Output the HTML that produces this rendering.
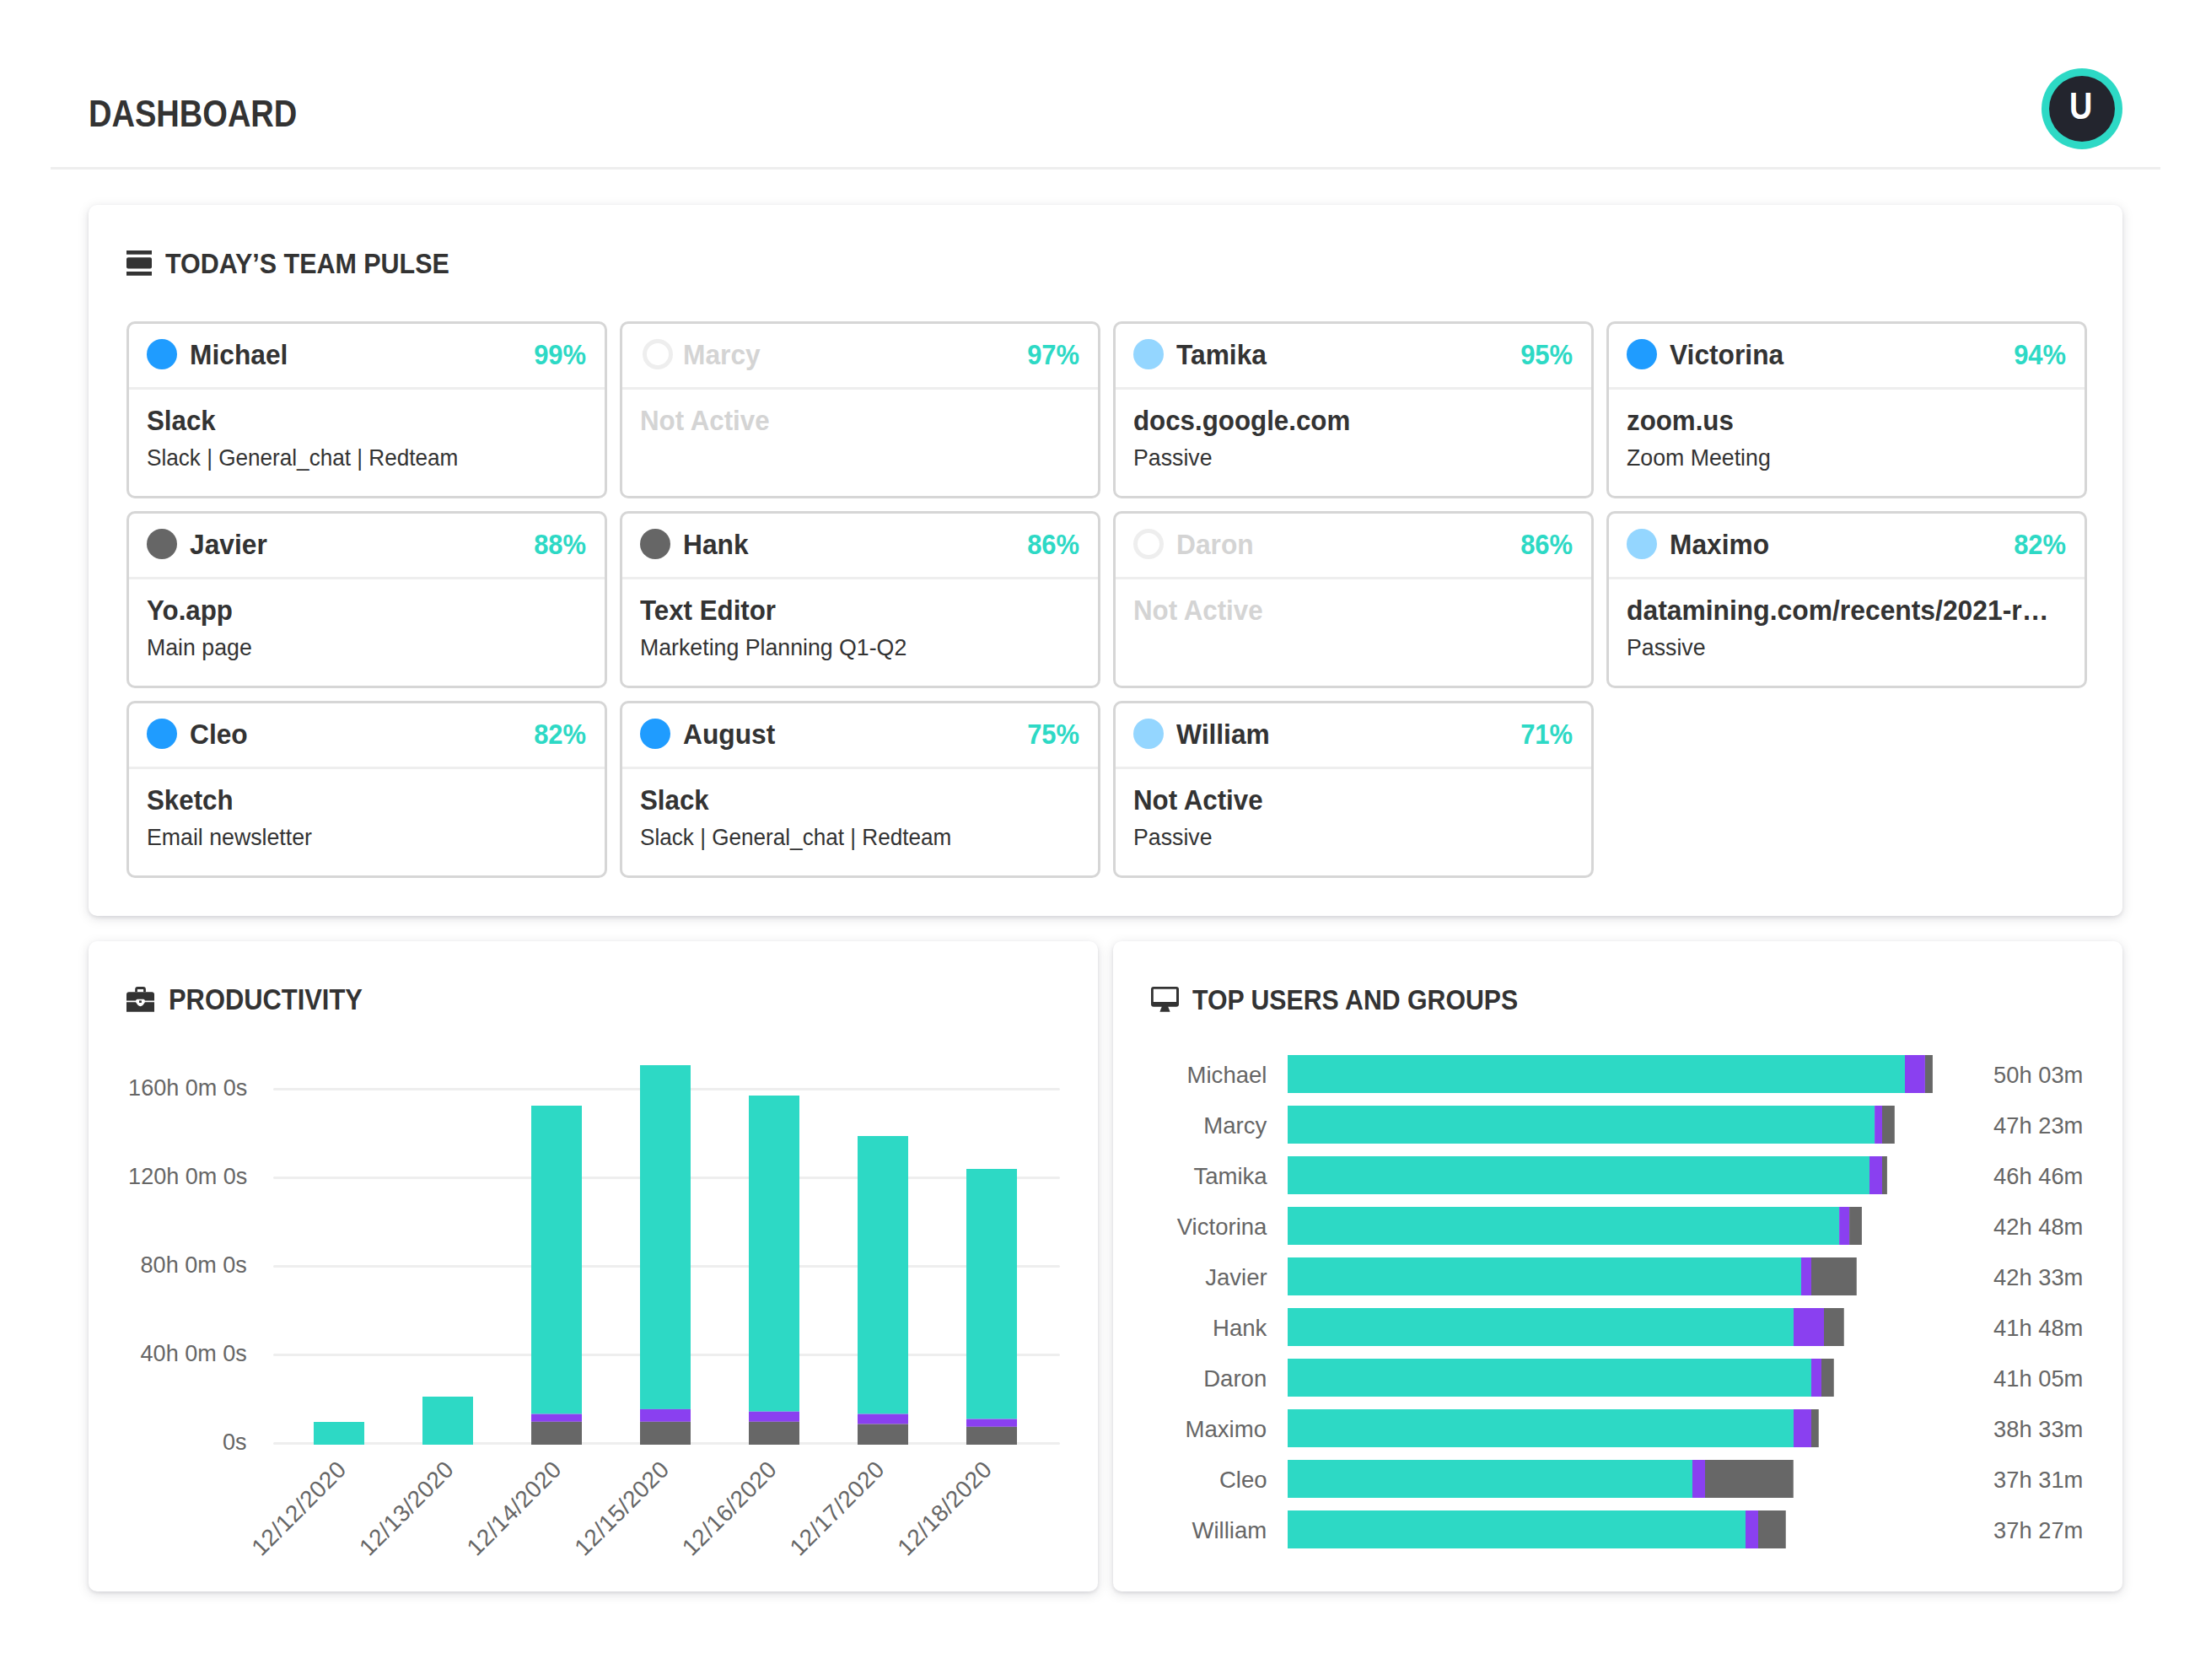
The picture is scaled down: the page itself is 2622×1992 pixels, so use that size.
<!DOCTYPE html>
<html><head><meta charset="utf-8"><title>Dashboard</title>
<style>
html,body{margin:0;padding:0;background:#ffffff;}
body{position:relative;width:2622px;height:1992px;overflow:hidden;font-family:"Liberation Sans", sans-serif;}
.t{position:absolute;line-height:1;white-space:nowrap;}
.card{position:absolute;background:#fff;border-radius:10px;box-shadow:0 2px 4px rgba(20,20,40,0.09),0 3px 14px rgba(20,20,40,0.13);}
.pc{position:absolute;width:570px;height:210px;box-sizing:border-box;border:3px solid #d6d6d6;border-radius:10px;background:#fff;}
.pc .sep{position:absolute;left:0;right:0;top:75px;height:3px;background:#eeeeee;}
</style></head>
<body>
<div class="t" style="left:105.2px;top:112.8px;font-size:44.5px;font-weight:700;color:#333333;transform:scaleX(0.855);transform-origin:0 0;">DASHBOARD</div>
<div style="position:absolute;left:60px;top:198px;width:2502px;height:3px;background:#eeeeee"></div>
<div style="position:absolute;left:2421px;top:81px;width:96px;height:96px;border-radius:50%;background:#2dd9c5"></div>
<div style="position:absolute;left:2430px;top:90px;width:78px;height:78px;border-radius:50%;background:#23252e"></div>
<div class="t" style="left:2454.4px;top:104.1px;font-size:44px;font-weight:700;color:#ffffff;transform:scaleX(0.86);transform-origin:0 0;">U</div>
<div class="card" style="left:105px;top:243px;width:2412px;height:843px"></div>
<svg style="position:absolute;left:150px;top:297px" width="30" height="30" viewBox="0 0 30 30">
<rect x="0" y="0" width="30" height="4.7" fill="#333333"/>
<rect x="0" y="8.2" width="30" height="13.4" rx="2" fill="#333333"/>
<rect x="0" y="25" width="30" height="4.8" fill="#333333"/>
</svg>
<div class="t" style="left:196.0px;top:295.2px;font-size:34px;font-weight:700;color:#333333;transform:scaleX(0.896);transform-origin:0 0;">TODAY’S TEAM PULSE</div>
<div class="pc" style="left:150px;top:381px"><div class="sep"></div></div>
<div style="position:absolute;left:174px;top:402px;width:36px;height:36px;border-radius:50%;background:#1f9cff"></div>
<div class="t" style="left:224.8px;top:403.2px;font-size:34px;font-weight:700;color:#333333;transform:scaleX(0.933);transform-origin:0 0;">Michael</div>
<div class="t" style="right:1927.0px;top:403.2px;font-size:34px;font-weight:700;color:#2dd9c5;transform:scaleX(0.91);transform-origin:100% 0;">99%</div>
<div class="t" style="left:174.2px;top:481.2px;font-size:34px;font-weight:700;color:#333333;transform:scaleX(0.92);transform-origin:0 0;">Slack</div>
<div class="t" style="left:174.2px;top:529.1px;font-size:28px;font-weight:400;color:#333333;transform:scaleX(0.933);transform-origin:0 0;">Slack | General_chat | Redteam</div>
<div class="pc" style="left:735px;top:381px"><div class="sep"></div></div>
<div style="position:absolute;left:762px;top:402px;width:36px;height:36px;box-sizing:border-box;border-radius:50%;border:5.5px solid #eeeeee"></div>
<div class="t" style="left:809.8px;top:403.2px;font-size:34px;font-weight:700;color:#d4d4d4;transform:scaleX(0.933);transform-origin:0 0;">Marcy</div>
<div class="t" style="right:1342.0px;top:403.2px;font-size:34px;font-weight:700;color:#2dd9c5;transform:scaleX(0.91);transform-origin:100% 0;">97%</div>
<div class="t" style="left:759.2px;top:481.2px;font-size:34px;font-weight:700;color:#d4d4d4;transform:scaleX(0.92);transform-origin:0 0;">Not Active</div>
<div class="pc" style="left:1320px;top:381px"><div class="sep"></div></div>
<div style="position:absolute;left:1344px;top:402px;width:36px;height:36px;border-radius:50%;background:#94d6ff"></div>
<div class="t" style="left:1394.8px;top:403.2px;font-size:34px;font-weight:700;color:#333333;transform:scaleX(0.933);transform-origin:0 0;">Tamika</div>
<div class="t" style="right:757.0px;top:403.2px;font-size:34px;font-weight:700;color:#2dd9c5;transform:scaleX(0.91);transform-origin:100% 0;">95%</div>
<div class="t" style="left:1344.2px;top:481.2px;font-size:34px;font-weight:700;color:#333333;transform:scaleX(0.92);transform-origin:0 0;">docs.google.com</div>
<div class="t" style="left:1344.2px;top:529.1px;font-size:28px;font-weight:400;color:#333333;transform:scaleX(0.954);transform-origin:0 0;">Passive</div>
<div class="pc" style="left:1905px;top:381px"><div class="sep"></div></div>
<div style="position:absolute;left:1929px;top:402px;width:36px;height:36px;border-radius:50%;background:#1f9cff"></div>
<div class="t" style="left:1979.8px;top:403.2px;font-size:34px;font-weight:700;color:#333333;transform:scaleX(0.933);transform-origin:0 0;">Victorina</div>
<div class="t" style="right:172.0px;top:403.2px;font-size:34px;font-weight:700;color:#2dd9c5;transform:scaleX(0.91);transform-origin:100% 0;">94%</div>
<div class="t" style="left:1929.2px;top:481.2px;font-size:34px;font-weight:700;color:#333333;transform:scaleX(0.92);transform-origin:0 0;">zoom.us</div>
<div class="t" style="left:1929.2px;top:529.1px;font-size:28px;font-weight:400;color:#333333;transform:scaleX(0.954);transform-origin:0 0;">Zoom Meeting</div>
<div class="pc" style="left:150px;top:606px"><div class="sep"></div></div>
<div style="position:absolute;left:174px;top:627px;width:36px;height:36px;border-radius:50%;background:#666666"></div>
<div class="t" style="left:224.8px;top:628.2px;font-size:34px;font-weight:700;color:#333333;transform:scaleX(0.933);transform-origin:0 0;">Javier</div>
<div class="t" style="right:1927.0px;top:628.2px;font-size:34px;font-weight:700;color:#2dd9c5;transform:scaleX(0.91);transform-origin:100% 0;">88%</div>
<div class="t" style="left:174.2px;top:706.2px;font-size:34px;font-weight:700;color:#333333;transform:scaleX(0.92);transform-origin:0 0;">Yo.app</div>
<div class="t" style="left:174.2px;top:754.1px;font-size:28px;font-weight:400;color:#333333;transform:scaleX(0.954);transform-origin:0 0;">Main page</div>
<div class="pc" style="left:735px;top:606px"><div class="sep"></div></div>
<div style="position:absolute;left:759px;top:627px;width:36px;height:36px;border-radius:50%;background:#666666"></div>
<div class="t" style="left:809.8px;top:628.2px;font-size:34px;font-weight:700;color:#333333;transform:scaleX(0.933);transform-origin:0 0;">Hank</div>
<div class="t" style="right:1342.0px;top:628.2px;font-size:34px;font-weight:700;color:#2dd9c5;transform:scaleX(0.91);transform-origin:100% 0;">86%</div>
<div class="t" style="left:759.2px;top:706.2px;font-size:34px;font-weight:700;color:#333333;transform:scaleX(0.92);transform-origin:0 0;">Text Editor</div>
<div class="t" style="left:759.2px;top:754.1px;font-size:28px;font-weight:400;color:#333333;transform:scaleX(0.954);transform-origin:0 0;">Marketing Planning Q1-Q2</div>
<div class="pc" style="left:1320px;top:606px"><div class="sep"></div></div>
<div style="position:absolute;left:1344px;top:627px;width:36px;height:36px;box-sizing:border-box;border-radius:50%;border:5.5px solid #eeeeee"></div>
<div class="t" style="left:1394.8px;top:628.2px;font-size:34px;font-weight:700;color:#d4d4d4;transform:scaleX(0.933);transform-origin:0 0;">Daron</div>
<div class="t" style="right:757.0px;top:628.2px;font-size:34px;font-weight:700;color:#2dd9c5;transform:scaleX(0.91);transform-origin:100% 0;">86%</div>
<div class="t" style="left:1344.2px;top:706.2px;font-size:34px;font-weight:700;color:#d4d4d4;transform:scaleX(0.92);transform-origin:0 0;">Not Active</div>
<div class="pc" style="left:1905px;top:606px"><div class="sep"></div></div>
<div style="position:absolute;left:1929px;top:627px;width:36px;height:36px;border-radius:50%;background:#94d6ff"></div>
<div class="t" style="left:1979.8px;top:628.2px;font-size:34px;font-weight:700;color:#333333;transform:scaleX(0.933);transform-origin:0 0;">Maximo</div>
<div class="t" style="right:172.0px;top:628.2px;font-size:34px;font-weight:700;color:#2dd9c5;transform:scaleX(0.91);transform-origin:100% 0;">82%</div>
<div class="t" style="left:1929.2px;top:706.2px;font-size:34px;font-weight:700;color:#333333;transform:scaleX(0.936);transform-origin:0 0;">datamining.com/recents/2021-r…</div>
<div class="t" style="left:1929.2px;top:754.1px;font-size:28px;font-weight:400;color:#333333;transform:scaleX(0.954);transform-origin:0 0;">Passive</div>
<div class="pc" style="left:150px;top:831px"><div class="sep"></div></div>
<div style="position:absolute;left:174px;top:852px;width:36px;height:36px;border-radius:50%;background:#1f9cff"></div>
<div class="t" style="left:224.8px;top:853.2px;font-size:34px;font-weight:700;color:#333333;transform:scaleX(0.933);transform-origin:0 0;">Cleo</div>
<div class="t" style="right:1927.0px;top:853.2px;font-size:34px;font-weight:700;color:#2dd9c5;transform:scaleX(0.91);transform-origin:100% 0;">82%</div>
<div class="t" style="left:174.2px;top:931.2px;font-size:34px;font-weight:700;color:#333333;transform:scaleX(0.92);transform-origin:0 0;">Sketch</div>
<div class="t" style="left:174.2px;top:979.1px;font-size:28px;font-weight:400;color:#333333;transform:scaleX(0.954);transform-origin:0 0;">Email newsletter</div>
<div class="pc" style="left:735px;top:831px"><div class="sep"></div></div>
<div style="position:absolute;left:759px;top:852px;width:36px;height:36px;border-radius:50%;background:#1f9cff"></div>
<div class="t" style="left:809.8px;top:853.2px;font-size:34px;font-weight:700;color:#333333;transform:scaleX(0.933);transform-origin:0 0;">August</div>
<div class="t" style="right:1342.0px;top:853.2px;font-size:34px;font-weight:700;color:#2dd9c5;transform:scaleX(0.91);transform-origin:100% 0;">75%</div>
<div class="t" style="left:759.2px;top:931.2px;font-size:34px;font-weight:700;color:#333333;transform:scaleX(0.92);transform-origin:0 0;">Slack</div>
<div class="t" style="left:759.2px;top:979.1px;font-size:28px;font-weight:400;color:#333333;transform:scaleX(0.933);transform-origin:0 0;">Slack | General_chat | Redteam</div>
<div class="pc" style="left:1320px;top:831px"><div class="sep"></div></div>
<div style="position:absolute;left:1344px;top:852px;width:36px;height:36px;border-radius:50%;background:#94d6ff"></div>
<div class="t" style="left:1394.8px;top:853.2px;font-size:34px;font-weight:700;color:#333333;transform:scaleX(0.933);transform-origin:0 0;">William</div>
<div class="t" style="right:757.0px;top:853.2px;font-size:34px;font-weight:700;color:#2dd9c5;transform:scaleX(0.91);transform-origin:100% 0;">71%</div>
<div class="t" style="left:1344.2px;top:931.2px;font-size:34px;font-weight:700;color:#333333;transform:scaleX(0.92);transform-origin:0 0;">Not Active</div>
<div class="t" style="left:1344.2px;top:979.1px;font-size:28px;font-weight:400;color:#333333;transform:scaleX(0.954);transform-origin:0 0;">Passive</div>
<div class="card" style="left:105px;top:1116px;width:1197px;height:771px"></div>
<svg style="position:absolute;left:150px;top:1170px" width="33" height="30" viewBox="0 0 33 30">
<path fill="#333333" d="M10.2 6.2 V3 Q10.2 0 13.2 0 H19.9 Q22.9 0 22.9 3 V6.2 H20.1 V2.9 H12.9 V6.2 Z"/>
<path fill="#333333" d="M0 9.2 Q0 6.2 3 6.2 H30 Q33 6.2 33 9.2 V16.4 H22 Q21.5 14.8 20 14.8 H13 Q11.5 14.8 11 16.4 H0 Z"/>
<path fill="#333333" d="M0 18.2 H11 L13.5 21.8 Q16.5 24.5 19.5 21.8 L22 18.2 H33 V29.8 H0 Z"/>
<rect x="15" y="16.4" width="2.9" height="2.6" fill="#333333"/>
</svg>
<div class="t" style="left:199.7px;top:1167.8px;font-size:34.5px;font-weight:700;color:#333333;transform:scaleX(0.895);transform-origin:0 0;">PRODUCTIVITY</div>
<svg style="position:absolute;left:0;top:0" width="2622" height="1992">
<line x1="325.5" y1="1291.5" x2="1255.5" y2="1291.5" stroke="#eeeeee" stroke-width="3" stroke-linecap="round"/>
<line x1="325.5" y1="1396.5" x2="1255.5" y2="1396.5" stroke="#eeeeee" stroke-width="3" stroke-linecap="round"/>
<line x1="325.5" y1="1501.5" x2="1255.5" y2="1501.5" stroke="#eeeeee" stroke-width="3" stroke-linecap="round"/>
<line x1="325.5" y1="1606.5" x2="1255.5" y2="1606.5" stroke="#eeeeee" stroke-width="3" stroke-linecap="round"/>
<line x1="325.5" y1="1711.5" x2="1255.5" y2="1711.5" stroke="#eeeeee" stroke-width="3" stroke-linecap="round"/>
<rect x="372" y="1686" width="60" height="27" fill="#2dd9c5"/>
<rect x="501" y="1656" width="60" height="57" fill="#2dd9c5"/>
<rect x="630" y="1311" width="60" height="365.5999999999999" fill="#2dd9c5"/>
<rect x="630" y="1676.6" width="60" height="9.200000000000045" fill="#8a40f0"/>
<rect x="630" y="1685.8" width="60" height="27.200000000000045" fill="#676767"/>
<rect x="759" y="1263" width="60" height="407.9000000000001" fill="#2dd9c5"/>
<rect x="759" y="1670.9" width="60" height="14.899999999999864" fill="#8a40f0"/>
<rect x="759" y="1685.8" width="60" height="27.200000000000045" fill="#676767"/>
<rect x="888" y="1299" width="60" height="374.70000000000005" fill="#2dd9c5"/>
<rect x="888" y="1673.7" width="60" height="12.099999999999909" fill="#8a40f0"/>
<rect x="888" y="1685.8" width="60" height="27.200000000000045" fill="#676767"/>
<rect x="1017" y="1347" width="60" height="329.5999999999999" fill="#2dd9c5"/>
<rect x="1017" y="1676.6" width="60" height="12.0" fill="#8a40f0"/>
<rect x="1017" y="1688.6" width="60" height="24.40000000000009" fill="#676767"/>
<rect x="1146" y="1386" width="60" height="296.5999999999999" fill="#2dd9c5"/>
<rect x="1146" y="1682.6" width="60" height="9.200000000000045" fill="#8a40f0"/>
<rect x="1146" y="1691.8" width="60" height="21.200000000000045" fill="#676767"/>
<text x="412.3" y="1744" transform="rotate(-45 412.3 1744)" text-anchor="end" font-family='"Liberation Sans", sans-serif' font-size="28" letter-spacing="0.45" fill="#666666">12/12/2020</text>
<text x="539.95" y="1744" transform="rotate(-45 539.95 1744)" text-anchor="end" font-family='"Liberation Sans", sans-serif' font-size="28" letter-spacing="0.45" fill="#666666">12/13/2020</text>
<text x="667.6" y="1744" transform="rotate(-45 667.6 1744)" text-anchor="end" font-family='"Liberation Sans", sans-serif' font-size="28" letter-spacing="0.45" fill="#666666">12/14/2020</text>
<text x="795.25" y="1744" transform="rotate(-45 795.25 1744)" text-anchor="end" font-family='"Liberation Sans", sans-serif' font-size="28" letter-spacing="0.45" fill="#666666">12/15/2020</text>
<text x="922.9000000000001" y="1744" transform="rotate(-45 922.9000000000001 1744)" text-anchor="end" font-family='"Liberation Sans", sans-serif' font-size="28" letter-spacing="0.45" fill="#666666">12/16/2020</text>
<text x="1050.55" y="1744" transform="rotate(-45 1050.55 1744)" text-anchor="end" font-family='"Liberation Sans", sans-serif' font-size="28" letter-spacing="0.45" fill="#666666">12/17/2020</text>
<text x="1178.2" y="1744" transform="rotate(-45 1178.2 1744)" text-anchor="end" font-family='"Liberation Sans", sans-serif' font-size="28" letter-spacing="0.45" fill="#666666">12/18/2020</text>
</svg>
<div class="t" style="right:2329.0px;top:1276.3px;font-size:28px;font-weight:400;color:#666666;transform:scaleX(0.965);transform-origin:100% 0;">160h 0m 0s</div>
<div class="t" style="right:2329.0px;top:1381.3px;font-size:28px;font-weight:400;color:#666666;transform:scaleX(0.965);transform-origin:100% 0;">120h 0m 0s</div>
<div class="t" style="right:2329.0px;top:1486.3px;font-size:28px;font-weight:400;color:#666666;transform:scaleX(0.965);transform-origin:100% 0;">80h 0m 0s</div>
<div class="t" style="right:2329.0px;top:1591.3px;font-size:28px;font-weight:400;color:#666666;transform:scaleX(0.965);transform-origin:100% 0;">40h 0m 0s</div>
<div class="t" style="right:2329.0px;top:1696.3px;font-size:28px;font-weight:400;color:#666666;transform:scaleX(0.965);transform-origin:100% 0;">0s</div>
<div class="card" style="left:1320px;top:1116px;width:1197px;height:771px"></div>
<svg style="position:absolute;left:1365px;top:1170px" width="33" height="30" viewBox="0 0 33 30">
<path fill-rule="evenodd" fill="#333333" d="M3 0 H30 Q33 0 33 3 V20.7 Q33 23.7 30 23.7 H3 Q0 23.7 0 20.7 V3 Q0 0 3 0 Z M2.8 2.8 V18 H30 V2.8 Z"/>
<path fill="#333333" d="M13 23 H20 L22.6 29.8 H10.4 Z"/>
</svg>
<div class="t" style="left:1413.5px;top:1168.2px;font-size:34px;font-weight:700;color:#333333;transform:scaleX(0.89);transform-origin:0 0;">TOP USERS AND GROUPS</div>
<svg style="position:absolute;left:0;top:0" width="2622" height="1992">
<rect x="1527" y="1251" width="732.00" height="45" fill="#2dd9c5"/>
<rect x="2259" y="1251" width="23.90" height="45" fill="#8a40f0"/>
<rect x="2282.9" y="1251" width="9.00" height="45" fill="#676767"/>
<rect x="1527" y="1311" width="696.10" height="45" fill="#2dd9c5"/>
<rect x="2223.1" y="1311" width="8.90" height="45" fill="#8a40f0"/>
<rect x="2232" y="1311" width="14.80" height="45" fill="#676767"/>
<rect x="1527" y="1371" width="690.00" height="45" fill="#2dd9c5"/>
<rect x="2217" y="1371" width="15.00" height="45" fill="#8a40f0"/>
<rect x="2232" y="1371" width="5.90" height="45" fill="#676767"/>
<rect x="1527" y="1431" width="654.10" height="45" fill="#2dd9c5"/>
<rect x="2181.1" y="1431" width="12.00" height="45" fill="#8a40f0"/>
<rect x="2193.1" y="1431" width="14.80" height="45" fill="#676767"/>
<rect x="1527" y="1491" width="609.00" height="45" fill="#2dd9c5"/>
<rect x="2136" y="1491" width="12.00" height="45" fill="#8a40f0"/>
<rect x="2148" y="1491" width="53.75" height="45" fill="#676767"/>
<rect x="1527" y="1551" width="600.00" height="45" fill="#2dd9c5"/>
<rect x="2127" y="1551" width="36.00" height="45" fill="#8a40f0"/>
<rect x="2163" y="1551" width="23.75" height="45" fill="#676767"/>
<rect x="1527" y="1611" width="621.00" height="45" fill="#2dd9c5"/>
<rect x="2148" y="1611" width="12.00" height="45" fill="#8a40f0"/>
<rect x="2160" y="1611" width="14.75" height="45" fill="#676767"/>
<rect x="1527" y="1671" width="600.00" height="45" fill="#2dd9c5"/>
<rect x="2127" y="1671" width="21.00" height="45" fill="#8a40f0"/>
<rect x="2148" y="1671" width="8.75" height="45" fill="#676767"/>
<rect x="1527" y="1731" width="480.00" height="45" fill="#2dd9c5"/>
<rect x="2007" y="1731" width="15.00" height="45" fill="#8a40f0"/>
<rect x="2022" y="1731" width="104.75" height="45" fill="#676767"/>
<rect x="1527" y="1791" width="543.00" height="45" fill="#2dd9c5"/>
<rect x="2070" y="1791" width="15.00" height="45" fill="#8a40f0"/>
<rect x="2085" y="1791" width="32.75" height="45" fill="#676767"/>
</svg>
<div class="t" style="right:1119.5px;top:1260.6px;font-size:28px;font-weight:400;color:#666666;transform:scaleX(0.984);transform-origin:100% 0;">Michael</div>
<div class="t" style="left:2363.5px;top:1260.6px;font-size:28px;font-weight:400;color:#666666;transform:scaleX(0.976);transform-origin:0 0;">50h 03m</div>
<div class="t" style="right:1119.5px;top:1320.6px;font-size:28px;font-weight:400;color:#666666;transform:scaleX(0.984);transform-origin:100% 0;">Marcy</div>
<div class="t" style="left:2363.5px;top:1320.6px;font-size:28px;font-weight:400;color:#666666;transform:scaleX(0.976);transform-origin:0 0;">47h 23m</div>
<div class="t" style="right:1119.5px;top:1380.6px;font-size:28px;font-weight:400;color:#666666;transform:scaleX(0.984);transform-origin:100% 0;">Tamika</div>
<div class="t" style="left:2363.5px;top:1380.6px;font-size:28px;font-weight:400;color:#666666;transform:scaleX(0.976);transform-origin:0 0;">46h 46m</div>
<div class="t" style="right:1119.5px;top:1440.6px;font-size:28px;font-weight:400;color:#666666;transform:scaleX(0.984);transform-origin:100% 0;">Victorina</div>
<div class="t" style="left:2363.5px;top:1440.6px;font-size:28px;font-weight:400;color:#666666;transform:scaleX(0.976);transform-origin:0 0;">42h 48m</div>
<div class="t" style="right:1119.5px;top:1500.6px;font-size:28px;font-weight:400;color:#666666;transform:scaleX(0.984);transform-origin:100% 0;">Javier</div>
<div class="t" style="left:2363.5px;top:1500.6px;font-size:28px;font-weight:400;color:#666666;transform:scaleX(0.976);transform-origin:0 0;">42h 33m</div>
<div class="t" style="right:1119.5px;top:1560.6px;font-size:28px;font-weight:400;color:#666666;transform:scaleX(0.984);transform-origin:100% 0;">Hank</div>
<div class="t" style="left:2363.5px;top:1560.6px;font-size:28px;font-weight:400;color:#666666;transform:scaleX(0.976);transform-origin:0 0;">41h 48m</div>
<div class="t" style="right:1119.5px;top:1620.6px;font-size:28px;font-weight:400;color:#666666;transform:scaleX(0.984);transform-origin:100% 0;">Daron</div>
<div class="t" style="left:2363.5px;top:1620.6px;font-size:28px;font-weight:400;color:#666666;transform:scaleX(0.976);transform-origin:0 0;">41h 05m</div>
<div class="t" style="right:1119.5px;top:1680.6px;font-size:28px;font-weight:400;color:#666666;transform:scaleX(0.984);transform-origin:100% 0;">Maximo</div>
<div class="t" style="left:2363.5px;top:1680.6px;font-size:28px;font-weight:400;color:#666666;transform:scaleX(0.976);transform-origin:0 0;">38h 33m</div>
<div class="t" style="right:1119.5px;top:1740.6px;font-size:28px;font-weight:400;color:#666666;transform:scaleX(0.984);transform-origin:100% 0;">Cleo</div>
<div class="t" style="left:2363.5px;top:1740.6px;font-size:28px;font-weight:400;color:#666666;transform:scaleX(0.976);transform-origin:0 0;">37h 31m</div>
<div class="t" style="right:1119.5px;top:1800.6px;font-size:28px;font-weight:400;color:#666666;transform:scaleX(0.984);transform-origin:100% 0;">William</div>
<div class="t" style="left:2363.5px;top:1800.6px;font-size:28px;font-weight:400;color:#666666;transform:scaleX(0.976);transform-origin:0 0;">37h 27m</div>
</body></html>
